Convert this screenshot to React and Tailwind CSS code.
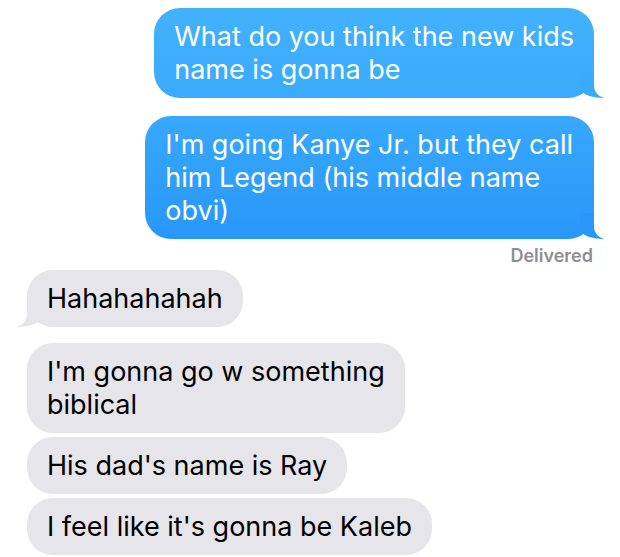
import React from "react";

function Tail({ color, side }) {
  const pos = side === "right" ? "right-[-10px]" : "left-[-10px] -scale-x-100";
  return (
    <svg
      className={`absolute bottom-0 ${pos}`}
      width="24"
      height="26"
      viewBox="0 0 24 26"
    >
      <path
        d="M14 0 L14 13 C14 19.5 17.5 23.8 24 26 C18 26 10 25 4 21.5 L0 14 L0 0 Z"
        fill={color}
      />
    </svg>
  );
}

function Blue({ children, from, to, className = "" }) {
  return (
    <div
      className={`relative rounded-[26px] bg-linear-to-b ${from} ${to} px-[21px] py-3 text-[27px] leading-[33px] text-white whitespace-nowrap ${className}`}
    >
      {children}
    </div>
  );
}

function Gray({ children, tail = false, className = "" }) {
  return (
    <div
      className={`relative rounded-[26px] bg-[#e5e5ea] px-[20px] py-3 text-[27px] leading-[33px] text-black whitespace-nowrap ${className}`}
    >
      {children}
      {tail && <Tail color="#e5e5ea" side="left" />}
    </div>
  );
}

export default function App() {
  return (
    <div
      className="w-[620px] h-[557px] overflow-hidden bg-white flex flex-col"
      style={{ fontFamily: "Inter, 'Liberation Sans', sans-serif" }}
    >
      <div className="flex flex-col items-end pr-[26px] pt-2">
        <div className="relative">
          <Blue from="from-[#42b1fd]" to="to-[#3aaafc]" className="pl-[20px] pr-[20px]">
            What do you think the new kids
            <br />
            name is gonna be
          </Blue>
          <Tail color="#3aaafc" side="right" />
        </div>
        <div className="relative mt-[18px]">
          <Blue from="from-[#37a8fc]" to="to-[#2897f8]" className="pl-[20px]">
            I'm going Kanye Jr. but they call
            <br />
            him Legend (his middle name
            <br />
            obvi)
          </Blue>
          <Tail color="#2897f8" side="right" />
        </div>
        <div className="mt-[6px] text-[18px] leading-[22px] font-semibold text-[#8e8e93] pr-[1px]">
          Delivered
        </div>
      </div>
      <div className="flex flex-col items-start pl-[27px] mt-[3px]">
        <Gray tail>Hahahahahah</Gray>
        <Gray className="mt-4">
          I'm gonna go w something
          <br />
          biblical
        </Gray>
        <Gray className="mt-1">His dad's name is Ray</Gray>
        <Gray className="mt-1">I feel like it's gonna be Kaleb</Gray>
        <div className="mt-1 ml-[4px] h-[57px] w-[215px] rounded-[26px] bg-[#e5e5ea]" />
      </div>
    </div>
  );
}
